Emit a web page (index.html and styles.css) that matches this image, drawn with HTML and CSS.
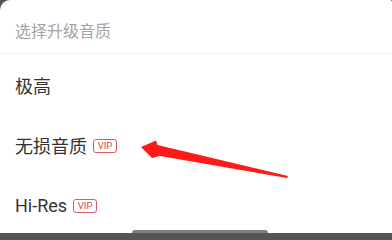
FILE: index.html
```html
<!DOCTYPE html>
<html lang="zh-CN">
<head>
<meta charset="utf-8">
<link rel="stylesheet" href="styles.css">
</head>
<body>
<div class="sheet">
  <div class="header">选择升级音质</div>
  <div class="list">
    <div class="row"><span class="label">极高</span></div>
    <div class="row"><span class="label">无损音质</span><span class="vip">VIP</span></div>
    <div class="row"><span class="label">Hi-Res</span><span class="vip">VIP</span></div>
  </div>
  <svg class="arrow" width="392" height="233" viewBox="0 0 392 233">
    <polygon fill="#ff1a1a" points="141,147 156,140.5 157.5,145 288,176 287,178 160,156 152,158"/>
  </svg>
  <div class="home"></div>
</div>
</body>
</html>
```
FILE: styles.css
```css
html, body {
  margin: 0;
  padding: 0;
  width: 392px;
  height: 233px;
  overflow: hidden;
  background: #555555;
}
.sheet {
  position: relative;
  width: 392px;
  height: 233px;
  background: #ffffff;
  border-top-left-radius: 10px;
  border-top-right-radius: 2px;
  overflow: hidden;
  font-family: Roboto, "Noto Sans CJK SC", sans-serif;
}
.header {
  box-sizing: border-box;
  height: 54px;
  padding: 6px 0 0 15px;
  display: flex;
  align-items: center;
  font-size: 16px;
  color: #a3a3a3;
  border-bottom: 1px solid #efefef;
}
.list {
  margin-top: 1px;
  display: flex;
  flex-direction: column;
}
.row {
  height: 60px;
  display: flex;
  align-items: center;
  padding-left: 15px;
  gap: 6px;
}
.label {
  font-size: 18px;
  color: #333333;
}
.vip {
  box-sizing: border-box;
  height: 14px;
  width: 24px;
  border: 1px solid #d06060;
  border-radius: 3px;
  color: #d04848;
  font-family: Roboto, sans-serif;
  font-size: 9.5px;
  display: flex;
  align-items: center;
  justify-content: center;
  margin-top: 1px;
}
.arrow {
  position: absolute;
  left: 0;
  top: 0;
}
.home {
  position: absolute;
  left: 132px;
  top: 230px;
  width: 136px;
  height: 5px;
  border-radius: 3px;
  background: #808080;
}
```
